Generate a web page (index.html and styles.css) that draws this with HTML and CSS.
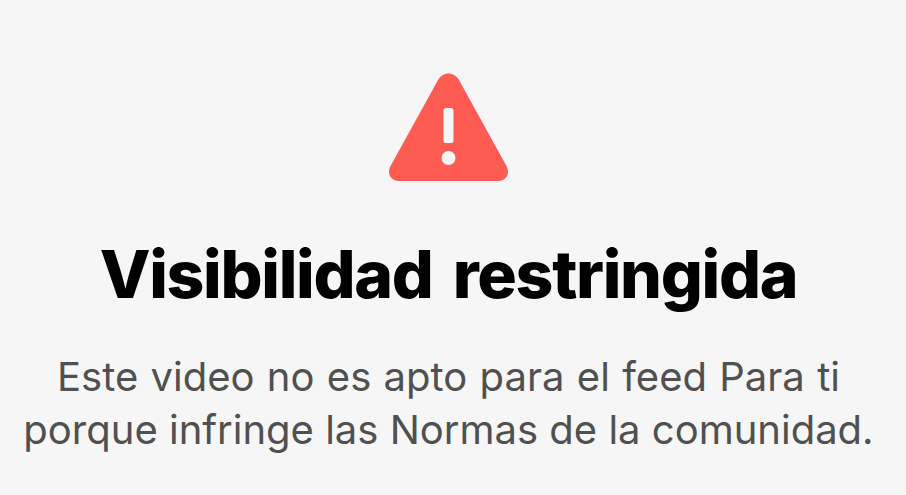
FILE: index.html
```html
<!DOCTYPE html>
<html lang="es">
<head>
<meta charset="utf-8">
<title>Visibilidad restringida</title>
<link rel="stylesheet" href="styles.css">
</head>
<body>
<main class="notice">
<svg class="icon" width="122" height="110" viewBox="0 0 122 110" aria-hidden="true">
<path fill="#fe5c52" d="M50 7 L2.5 93 C-1.5 101 3 108 11 108 L110 108 C118 108 122.5 101 118.5 93 L71 7 C66 -1.7 55 -1.7 50 7 Z"/>
<rect x="55.5" y="35" width="10" height="35" rx="2.5" fill="#f6f6f6"/>
<circle cx="60.5" cy="85" r="7" fill="#f6f6f6"/>
</svg>
<h1 class="title">Visibilidad restringida</h1>
<p class="text"><span class="line-wide">Este video no es apto para el feed Para ti</span><br>porque infringe las Normas de la comunidad.</p>
</main>
</body>
</html>
```
FILE: styles.css
```css
html, body { margin: 0; padding: 0; }
body { width: 906px; height: 495px; background: #f6f6f6; overflow: hidden; font-family: Inter, "Liberation Sans", sans-serif; }
.notice { display: flex; flex-direction: column; align-items: center; padding: 73px 9px 0 0; }
.icon { display: block; }
.title { margin: 51px 0 0; font-size: 66px; line-height: 80px; font-weight: 800; letter-spacing: -1.3px; word-spacing: 7px; color: #000; white-space: nowrap; }
.text { margin: 36px 0 0; font-size: 40px; line-height: 53px; font-weight: 400; color: #505050; text-align: center; white-space: nowrap; }
.line-wide { word-spacing: 1.1px; }
```
